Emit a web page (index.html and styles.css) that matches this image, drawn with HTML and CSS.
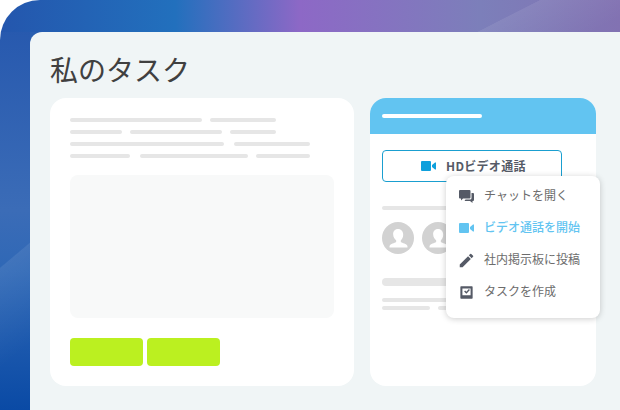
FILE: index.html
```html
<!DOCTYPE html>
<html lang="ja">
<head>
    <meta charset="UTF-8">
    <title>私のタスク</title>
    <link rel="stylesheet" href="styles.css">
</head>
<body>
    <div class="frame">
        <div class="panel">
            <h1 class="title">私のタスク</h1>
            <div class="cards">
                <div class="card card-main">
                    <div class="row"><span class="bar w132"></span><span class="bar w66"></span></div>
                    <div class="row"><span class="bar w52"></span><span class="bar w92"></span><span class="bar w46"></span></div>
                    <div class="row row-wide"><span class="bar w154"></span><span class="bar w76"></span></div>
                    <div class="row row-wide"><span class="bar w60"></span><span class="bar w108"></span><span class="bar w54"></span></div>
                    <div class="placeholder"></div>
                    <div class="actions">
                        <span class="action"></span>
                        <span class="action"></span>
                    </div>
                </div>

                <div class="card card-side">
                    <div class="side-header"><span class="header-line"></span></div>
                    <div class="side-body">
                        <div class="call-button">
                            <svg class="call-icon" viewBox="0 0 15 10"><path d="M1 0h8a1 1 0 0 1 1 1v8a1 1 0 0 1-1 1H1a1 1 0 0 1-1-1V1a1 1 0 0 1 1-1zM11 4l3-2.500a.6.6 0 0 1 1 .4v6.200a.6.6 0 0 1-1 .4L11 6z"/></svg>
                            <span class="call-label">HDビデオ通話</span>
                        </div>
                        <div class="bar-thin"></div>
                        <div class="avatars">
                            <svg class="avatar" viewBox="0 0 32 32"><circle cx="16" cy="16" r="16" fill="#d2d2d2"/><path fill="#fff" d="M16 7c3.300 0 5.200 2.500 5.200 5.800 0 2.400-1 4.500-2.400 5.600v1.300c0 1 4.700 1.700 6.200 3.500.6.700.5 1.800.5 2.300H7.500c0-.5-.1-1.600.5-2.300 1.500-1.800 6.200-2.500 6.200-3.500v-1.300c-1.400-1.100-3-3.200-3-5.600C10.800 9.500 12.700 7 16 7z"/></svg>
                            <svg class="avatar" viewBox="0 0 32 32"><circle cx="16" cy="16" r="16" fill="#d2d2d2"/><path fill="#fff" d="M16 7c3.300 0 5.200 2.500 5.200 5.800 0 2.400-1 4.500-2.400 5.600v1.300c0 1 4.700 1.700 6.200 3.500.6.700.5 1.800.5 2.300H7.500c0-.5-.1-1.600.5-2.300 1.500-1.800 6.200-2.500 6.200-3.500v-1.300c-1.400-1.100-3-3.200-3-5.600C10.800 9.500 12.700 7 16 7z"/></svg>
                        </div>
                        <div class="bar-thick"></div>
                        <div class="bar-long"></div>
                        <div class="row-small"><span class="bar w48"></span><span class="bar w66"></span></div>
                    </div>
                </div>
            </div>

            <!-- dropdown over the side card -->
            <ul class="menu">
                <li class="menu-item">
                    <svg class="menu-icon" viewBox="0 0 15 15"><path d="M1 1h9.500a1 1 0 0 1 1 1v6.500a1 1 0 0 1-1 1H4L2 11.500v-2H1a1 1 0 0 1-1-1V2a1 1 0 0 1 1-1zM12.500 4H14a1 1 0 0 1 1 1v6a1 1 0 0 1-1 1h-.5v2L11 12H5.500l1-1.500h4.500a1.500 1.500 0 0 0 1.500-1.500z"/></svg>
                    <span class="menu-label">チャットを開く</span>
                </li>
                <li class="menu-item active">
                    <svg class="menu-icon" viewBox="0 0 15 10"><path d="M1 0h8a1 1 0 0 1 1 1v8a1 1 0 0 1-1 1H1a1 1 0 0 1-1-1V1a1 1 0 0 1 1-1zM11 4l3-2.500a.6.6 0 0 1 1 .4v6.200a.6.6 0 0 1-1 .4L11 6z"/></svg>
                    <span class="menu-label">ビデオ通話を開始</span>
                </li>
                <li class="menu-item">
                    <svg class="menu-icon" viewBox="2 2 20 20"><path d="M3 17.250V21h3.750L17.810 9.940l-3.750-3.750L3 17.250zM20.710 7.040a1 1 0 0 0 0-1.410l-2.340-2.340a1 1 0 0 0-1.410 0l-1.830 1.830 3.750 3.750 1.830-1.830z"/></svg>
                    <span class="menu-label">社内掲示板に投稿</span>
                </li>
                <li class="menu-item">
                    <svg class="menu-icon" viewBox="1 1 22 22"><path fill-rule="evenodd" d="M4 3h16a1 1 0 0 1 1 1v16a1 1 0 0 1-1 1H4a1 1 0 0 1-1-1V4a1 1 0 0 1 1-1zm2 3v10h12V6H6zm2.500 4.500l1.500-1.500 1.800 1.800L15.500 7l1.500 1.500-5.200 5.200-3.300-3.200z"/></svg>
                    <span class="menu-label">タスクを作成</span>
                </li>
            </ul>
        </div>
    </div>
</body>
</html>
```

FILE: styles.css
```css
html, body {
    margin: 0;
    padding: 0;
    background-color: #fff;
}

body {
    width: 620px;
    height: 410px;
    overflow: hidden;
    font-family: "Noto Sans CJK JP", "Noto Sans", sans-serif;
}

.frame {
    box-sizing: border-box;
    height: 410px;
    padding: 32px 0 0 30px;
    border-top-left-radius: 40px;
    background-color: #2a5fb0;
    background-image:
        linear-gradient(153deg, rgba(255, 255, 255, 0) 79%, rgba(255, 255, 255, 0.08) 79.2%, rgba(255, 255, 255, 0) 96%),
        linear-gradient(90deg, #2456ad 0, #2270bd 175px, #8d68c6 300px, #7c7fba 480px, #8272b2 620px),
        linear-gradient(140deg, rgba(255, 255, 255, 0) 61.400%, rgba(255, 255, 255, 0.08) 61.700%, rgba(255, 255, 255, 0) 85%),
        linear-gradient(180deg, #2456ad 0, #3b6cb7 210px, #2f68b6 270px, #0a4aa5 410px);
    background-size: 100% 32px, 100% 32px, 30px 100%, 30px 100%;
    background-repeat: no-repeat;
}

.panel {
    position: relative;
    box-sizing: border-box;
    height: 378px;
    padding: 20px 24px 0 20px;
    border-top-left-radius: 12px;
    background-color: #f0f5f6;
}

.title {
    margin: 0 0 12px;
    font-size: 28px;
    font-weight: 400;
    line-height: 34px;
    color: #404040;
}

.cards {
    display: flex;
    gap: 16px;
}

.card {
    box-sizing: border-box;
    height: 288px;
    border-radius: 16px;
    background-color: #fff;
    overflow: hidden;
}

.card-main {
    width: 304px;
    padding: 20px;
}

.card-side {
    width: 226px;
}

/* fake text lines */
.row {
    display: flex;
    gap: 8px;
    margin-bottom: 8px;
}

.row-wide {
    gap: 10px;
}

.row:nth-child(4) {
    gap: 8px;
}

.row:nth-child(4) .w60 {
    margin-right: 2px;
}

.bar {
    display: block;
    height: 4px;
    border-radius: 2px;
    background-color: #e6e6e6;
}

.w46 { width: 46px; }
.w48 { width: 48px; }
.w52 { width: 52px; }
.w54 { width: 54px; }
.w60 { width: 60px; }
.w66 { width: 66px; }
.w76 { width: 76px; }
.w92 { width: 92px; }
.w108 { width: 108px; }
.w132 { width: 132px; }
.w154 { width: 154px; }

.placeholder {
    height: 143px;
    margin-top: 17px;
    border-radius: 8px;
    background-color: #f8f9f9;
}

.actions {
    display: flex;
    gap: 4px;
    margin-top: 20px;
}

.action {
    display: block;
    width: 73px;
    height: 28px;
    border-radius: 4px;
    background-color: #bbf020;
}

.side-header {
    display: flex;
    align-items: center;
    height: 36px;
    padding: 0 12px;
    background-color: #62c4f1;
}

.header-line {
    display: block;
    width: 100px;
    height: 4px;
    border-radius: 2px;
    background-color: #fff;
}

.side-body {
    padding: 16px 12px;
}

.call-button {
    box-sizing: border-box;
    display: flex;
    align-items: center;
    gap: 10px;
    width: 180px;
    height: 32px;
    padding-left: 38px;
    border: 1px solid #1a9fd0;
    border-radius: 4px;
    font-size: 12px;
    font-weight: 700;
    color: #555a66;
}

.call-label {
    padding-bottom: 2px;
    letter-spacing: 0.3px;
}

.call-icon {
    width: 15px;
    height: 10px;
    fill: #0fa0dc;
}

.bar-thin {
    width: 180px;
    height: 4px;
    margin-top: 24px;
    border-radius: 2px;
    background-color: #e6e6e6;
}

.avatars {
    display: flex;
    gap: 8px;
    margin-top: 12px;
}

.avatar {
    width: 32px;
    height: 32px;
}

.bar-thick {
    width: 180px;
    height: 8px;
    margin-top: 24px;
    border-radius: 4px;
    background-color: #e6e6e6;
}

.bar-long {
    width: 180px;
    height: 4px;
    margin-top: 12px;
    border-radius: 2px;
    background-color: #e6e6e6;
}

.row-small {
    display: flex;
    gap: 8px;
    margin-top: 4px;
}

.menu {
    position: absolute;
    top: 144px;
    left: 416px;
    box-sizing: border-box;
    width: 154px;
    height: 142px;
    margin: 0;
    padding: 4px 0 10px;
    list-style: none;
    border-radius: 8px;
    background-color: #fff;
    box-shadow: 0 1px 6px rgba(0, 0, 0, 0.2);
}

.menu-item {
    display: flex;
    align-items: center;
    gap: 10px;
    height: 32px;
    padding-left: 13px;
    font-size: 12px;
    color: #6c6c6c;
}

.menu-label {
    padding-bottom: 3px;
}

.menu-icon {
    width: 15px;
    height: 15px;
    fill: #555a66;
}

.active {
    font-weight: 500;
    color: #62c4f1;
}

.active .menu-icon {
    height: 10px;
    fill: #62c4f1;
}
```
